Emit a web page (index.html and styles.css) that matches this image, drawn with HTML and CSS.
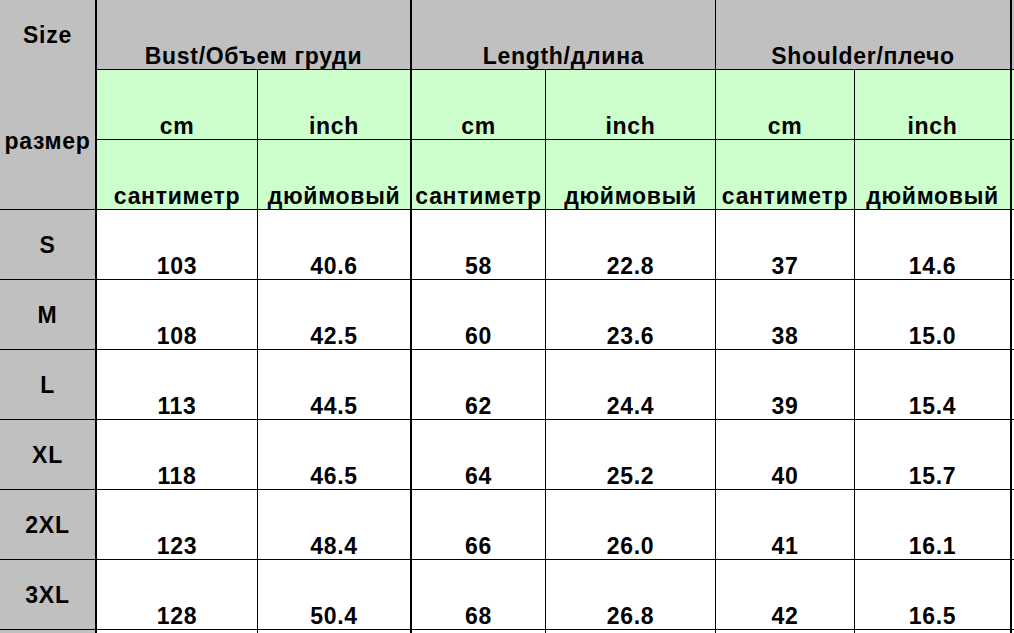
FILE: index.html
```html
<!DOCTYPE html>
<html>
<head>
<meta charset="utf-8">
<link rel="stylesheet" href="styles.css">
</head>
<body>
<div class="sheet">
  <div class="cell gray c0 size-hd"><span class="l1">Size</span><span class="l2">размер</span></div>
  <div class="cell gray bot c2 g2">Bust/Объем груди</div>
  <div class="cell gray bot c4 g2">Length/длина</div>
  <div class="cell gray bot c6 g2">Shoulder/плечо</div>
  <div class="cell gray c7"></div>

  <div class="cell green bot c1">cm</div>
  <div class="cell green bot c2">inch</div>
  <div class="cell green bot c3">cm</div>
  <div class="cell green bot c4">inch</div>
  <div class="cell green bot c5">cm</div>
  <div class="cell green bot c6">inch</div>
  <div class="cell green c7"></div>

  <div class="cell green bot c1">сантиметр</div>
  <div class="cell green bot c2">дюймовый</div>
  <div class="cell green bot c3">сантиметр</div>
  <div class="cell green bot c4">дюймовый</div>
  <div class="cell green bot c5">сантиметр</div>
  <div class="cell green bot c6">дюймовый</div>
  <div class="cell green c7"></div>

  <div class="cell gray mid c0">S</div>
  <div class="cell bot c1">103</div><div class="cell bot c2">40.6</div><div class="cell bot c3">58</div><div class="cell bot c4">22.8</div><div class="cell bot c5">37</div><div class="cell bot c6">14.6</div><div class="cell c7"></div>

  <div class="cell gray mid c0">M</div>
  <div class="cell bot c1">108</div><div class="cell bot c2">42.5</div><div class="cell bot c3">60</div><div class="cell bot c4">23.6</div><div class="cell bot c5">38</div><div class="cell bot c6">15.0</div><div class="cell c7"></div>

  <div class="cell gray mid c0">L</div>
  <div class="cell bot c1">113</div><div class="cell bot c2">44.5</div><div class="cell bot c3">62</div><div class="cell bot c4">24.4</div><div class="cell bot c5">39</div><div class="cell bot c6">15.4</div><div class="cell c7"></div>

  <div class="cell gray mid c0">XL</div>
  <div class="cell bot c1">118</div><div class="cell bot c2">46.5</div><div class="cell bot c3">64</div><div class="cell bot c4">25.2</div><div class="cell bot c5">40</div><div class="cell bot c6">15.7</div><div class="cell c7"></div>

  <div class="cell gray mid c0">2XL</div>
  <div class="cell bot c1">123</div><div class="cell bot c2">48.4</div><div class="cell bot c3">66</div><div class="cell bot c4">26.0</div><div class="cell bot c5">41</div><div class="cell bot c6">16.1</div><div class="cell c7"></div>

  <div class="cell gray mid c0">3XL</div>
  <div class="cell bot c1">128</div><div class="cell bot c2">50.4</div><div class="cell bot c3">68</div><div class="cell bot c4">26.8</div><div class="cell bot c5">42</div><div class="cell bot c6">16.5</div><div class="cell c7"></div>

  <div class="cell gray c0"></div>
  <div class="cell c1"></div><div class="cell c2"></div><div class="cell c3"></div><div class="cell c4"></div><div class="cell c5"></div><div class="cell c6"></div><div class="cell c7"></div>
</div>
</body>
</html>
```

FILE: styles.css
```css
html, body {
  margin: 0;
  padding: 0;
  background: #ffffff;
  overflow: hidden;
}

.sheet {
  display: grid;
  grid-template-columns: 97px 161px 154px 134px 170px 139px 157px 1fr;
  grid-template-rows: repeat(9, 70px) 20px;
  width: 1014px;
  height: 633px;
  overflow: hidden;
  font-family: "Liberation Sans", Arial, sans-serif;
  font-weight: bold;
  font-size: 23px;
  letter-spacing: 0.7px;
  line-height: 24px;
  color: #000000;
}

.cell {
  box-sizing: border-box;
  border-bottom: 1px solid #000000;
  border-right: 1px solid #000000;
  background: #ffffff;
  white-space: nowrap;
  overflow: hidden;
}

.gray { background: #c0c0c0; }
.green { background: #ccffcc; }

.c0, .c2, .c6 { border-right-width: 2px; }
.c7 { border-right: none; }

.g2 { grid-column: span 2; }

.bot {
  display: flex;
  align-items: flex-end;
  justify-content: center;
  padding-bottom: 1px;
}

.mid {
  display: flex;
  align-items: center;
  justify-content: center;
  padding-top: 0;
}

.size-hd {
  grid-row: span 3;
  display: flex;
  flex-direction: column;
  align-items: center;
  padding-top: 23px;
}

.size-hd .l2 {
  margin-top: 82px;
}
```
